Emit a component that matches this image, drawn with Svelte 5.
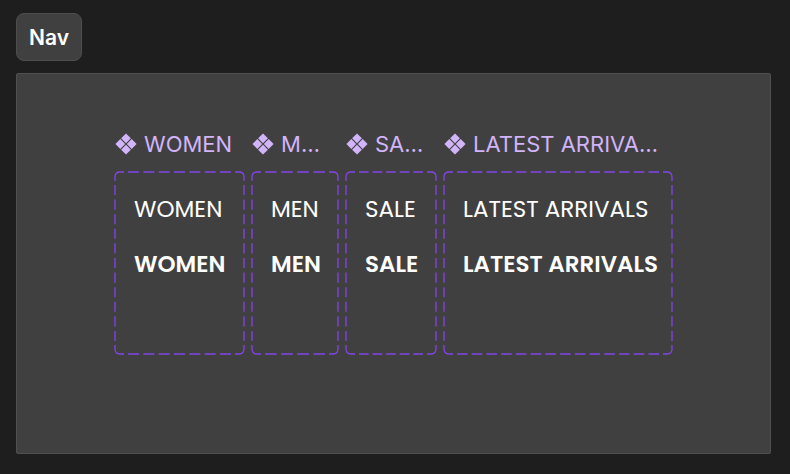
<script lang="ts">
  interface Variant {
    label: string;
    width: number;
    dashes: number;
  }

  const height = 184;

  const variants: Variant[] = [
    { label: 'WOMEN', width: 131, dashes: 7 },
    { label: 'MEN', width: 88, dashes: 4 },
    { label: 'SALE', width: 92, dashes: 5 },
    { label: 'LATEST ARRIVALS', width: 230, dashes: 14 }
  ];

  function corners(w: number, h: number) {
    return [
      `M1 10V6Q1 1 6 1H10`,
      `M${w - 10} 1H${w - 6}Q${w - 1} 1 ${w - 1} 6V10`,
      `M${w - 1} ${h - 10}V${h - 6}Q${w - 1} ${h - 1} ${w - 6} ${h - 1}H${w - 10}`,
      `M10 ${h - 1}H6Q1 ${h - 1} 1 ${h - 6}V${h - 10}`
    ].join('');
  }
</script>

<main class="canvas">
  <h1 class="section-name">Nav</h1>

  <section class="section">
    {#each variants as { label, width, dashes }}
      <article class="component" style:width="{width}px">
        <h2 class="component-name">
          <svg class="icon" viewBox="0 0 22 22" aria-hidden="true">
            <path d="M11 0.4L15.9 5.3L11 10.2L6.1 5.3ZM5.3 6.1L10.2 11L5.3 15.9L0.4 11ZM16.7 6.1L21.6 11L16.7 15.9L11.8 11ZM11 11.8L15.9 16.7L11 21.6L6.1 16.7Z" />
          </svg>
          <span>{label}</span>
        </h2>

        <div class="frame">
          <svg class="outline" viewBox="0 0 {width} {height}" aria-hidden="true">
            <!-- corners, then the dashed sides between them -->
            <path d={corners(width, height)} />
            {#each [1, height - 1] as y}
              <path d="M14 {y}H{width - 14}" pathLength={dashes * 14 - 4} stroke-dasharray="10 4" />
            {/each}
            {#each [1, width - 1] as x}
              <path d="M{x} 14V{height - 14}" pathLength="155" stroke-dasharray="10 4.5" />
            {/each}
          </svg>
          <a href="#nav">{label}</a>
          <a href="#nav" class="active">{label}</a>
        </div>
      </article>
    {/each}
  </section>
</main>

<style>
  :global(body) {
    margin: 0;
    background: #1e1e1e;
  }

  .canvas {
    box-sizing: border-box;
    min-height: 100vh;
    display: flex;
    flex-direction: column;
    align-items: flex-start;
    gap: 12px;
    padding: 13px 19px 20px 16px;
    font-family: Inter, sans-serif;
  }

  .section-name {
    margin: 0;
    padding: 1px 12px 0;
    border: 1px solid #4e4e4e;
    border-radius: 8px;
    background: #404040;
    color: #fff;
    font-size: 21px;
    font-weight: 600;
    line-height: 45px;
  }

  .section {
    box-sizing: border-box;
    width: 100%;
    flex: 1;
    display: flex;
    align-items: flex-start;
    gap: 6px;
    padding: 55px 97px;
    border: 1px solid #505050;
    border-radius: 2px;
    background: #404040;
  }

  .component {
    flex: none;
  }

  .component-name {
    display: flex;
    align-items: center;
    gap: 7px;
    margin: 0 0 12px;
    padding: 0 12px 0 1px;
    color: #d1b4fa;
    font-size: 22px;
    font-weight: 400;
    line-height: 30px;
  }

  .component-name span {
    overflow: hidden;
    text-overflow: ellipsis;
    white-space: nowrap;
  }

  .icon {
    flex: none;
    width: 22px;
    height: 22px;
    fill: currentColor;
  }

  .frame {
    position: relative;
    box-sizing: border-box;
    height: 184px;
    display: flex;
    flex-direction: column;
    gap: 23px;
    padding: 22px 20px;
  }

  .outline {
    position: absolute;
    inset: 0;
    fill: none;
    stroke: #8344e8;
    stroke-width: 1.3;
    pointer-events: none;
  }

  .frame a {
    color: #fff;
    font-family: Poppins, Lato, sans-serif;
    font-size: 23px;
    line-height: 32px;
    text-decoration: none;
    white-space: nowrap;
  }

  .frame .active {
    font-weight: 600;
  }
</style>
